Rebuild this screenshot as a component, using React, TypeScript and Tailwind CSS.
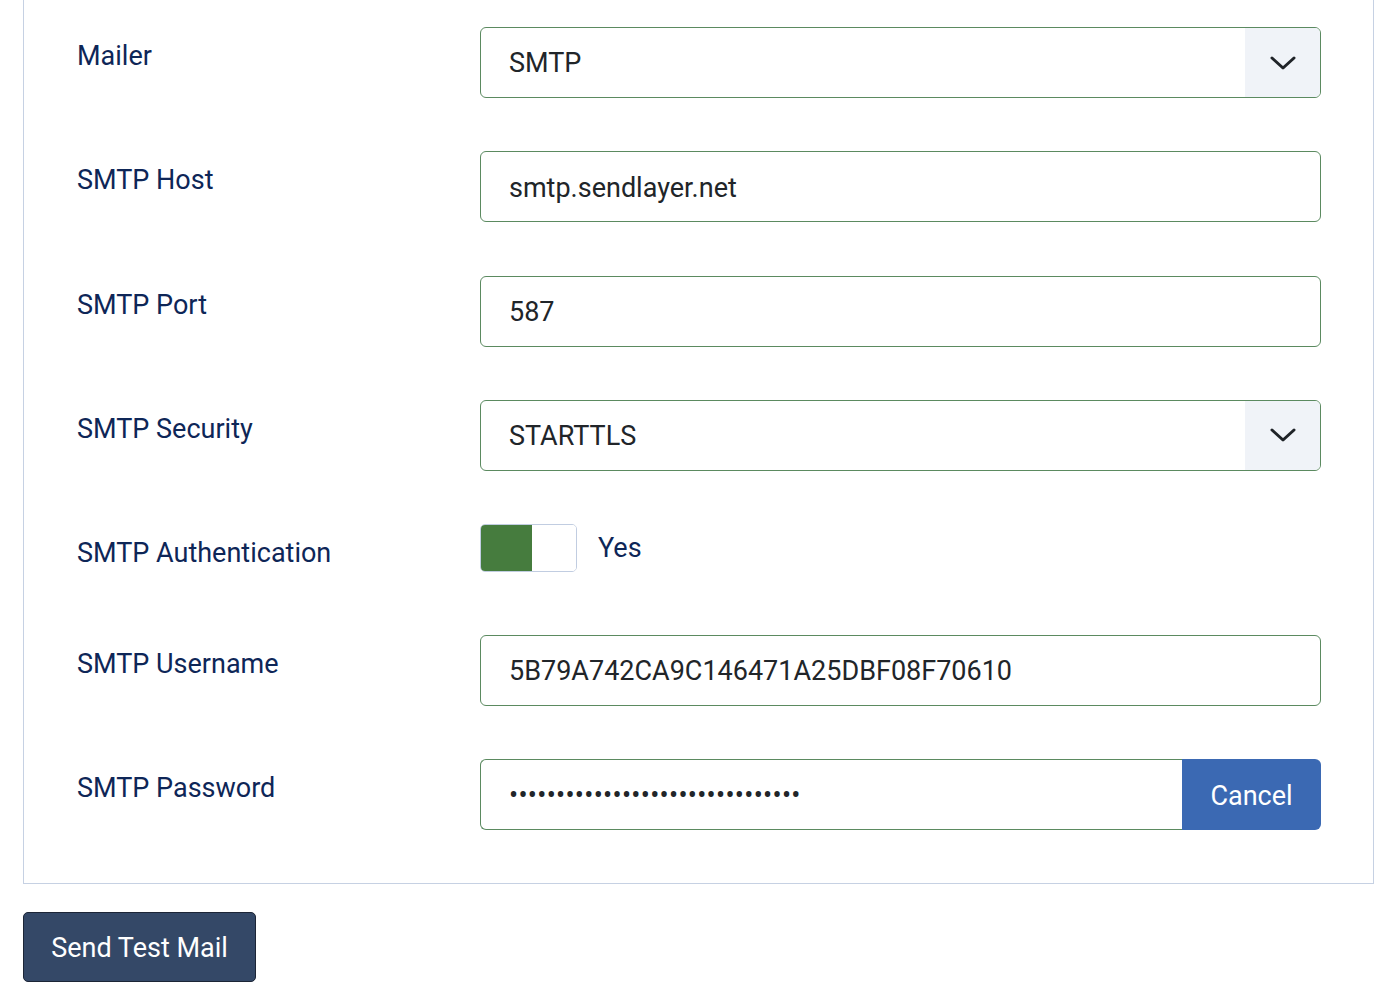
import React from "react";

const Chevron = () => (
  <svg width="26" height="16" viewBox="0 0 26 16" fill="none">
    <path d="M2 3 L13 13 L24 3" stroke="#1f2328" strokeWidth="3" strokeLinecap="round" strokeLinejoin="round" />
  </svg>
);

const Label = ({ children }: { children: React.ReactNode }) => (
  <div className="w-[403px] shrink-0 pt-[12px] text-[27px] leading-[34px] text-[#0e2657]">{children}</div>
);

const TextInput = ({ value }: { value: string }) => (
  <div className="flex h-[71px] flex-1 items-center rounded-[6px] border border-[#5b8a60] bg-white pl-[28px] pt-[2px] text-[27px] text-[#212529]">
    {value}
  </div>
);

const SelectInput = ({ value }: { value: string }) => (
  <div className="flex h-[71px] flex-1 items-stretch overflow-hidden rounded-[6px] border border-[#5b8a60] bg-white text-[27px] text-[#212529]">
    <div className="flex flex-1 items-center pl-[28px] pt-[2px]">{value}</div>
    <div className="flex w-[75px] items-center justify-center bg-[#f0f3f8]">
      <Chevron />
    </div>
  </div>
);

export default function App() {
  return (
    <div className="min-h-[997px] bg-white pl-[23px] pr-[26px]" style={{ fontFamily: "Roboto, 'Liberation Sans', sans-serif" }}>
      <div className="w-[1351px] border-x border-b border-[#c6d1e3] pl-[53px] pr-[52px] pt-[27px] pb-[53px]">
        <div className="flex flex-col gap-[53.3px]">
          <div className="flex">
            <Label>Mailer</Label>
            <SelectInput value="SMTP" />
          </div>
          <div className="flex">
            <Label>SMTP Host</Label>
            <TextInput value="smtp.sendlayer.net" />
          </div>
          <div className="flex">
            <Label>SMTP Port</Label>
            <TextInput value="587" />
          </div>
          <div className="flex">
            <Label>SMTP Security</Label>
            <SelectInput value="STARTTLS" />
          </div>
          <div className="flex h-[57.5px]">
            <Label>SMTP Authentication</Label>
            <div className="flex items-start">
              <div className="flex h-[48px] w-[97px] overflow-hidden rounded-[5px] border border-[#c1cde1] bg-white">
                <div className="w-[51px] bg-[#467c3e]" />
                <div className="flex-1 bg-white" />
              </div>
              <div className="ml-[21px] pt-[7px] text-[27px] leading-[34px] text-[#0e2657]">Yes</div>
            </div>
          </div>
          <div className="flex">
            <Label>SMTP Username</Label>
            <TextInput value="5B79A742CA9C146471A25DBF08F70610" />
          </div>
          <div className="flex">
            <Label>SMTP Password</Label>
            <div className="flex h-[71px] flex-1 items-stretch">
              <div className="flex flex-1 items-center rounded-l-[6px] border border-r-0 border-[#5b8a60] bg-white pl-[28px] text-[27px] tracking-[0.3px] text-[#212529]">
                {"•".repeat(31)}
              </div>
              <button className="w-[139px] rounded-r-[6px] bg-[#3b69b3] pt-[2px] text-[27px] text-white">Cancel</button>
            </div>
          </div>
        </div>
      </div>
      <div className="pt-[28px]">
        <button className="h-[70px] w-[233px] rounded-[5px] border border-[#1c2536] bg-[#344867] pt-[2px] text-[27px] text-white">
          Send Test Mail
        </button>
      </div>
    </div>
  );
}
